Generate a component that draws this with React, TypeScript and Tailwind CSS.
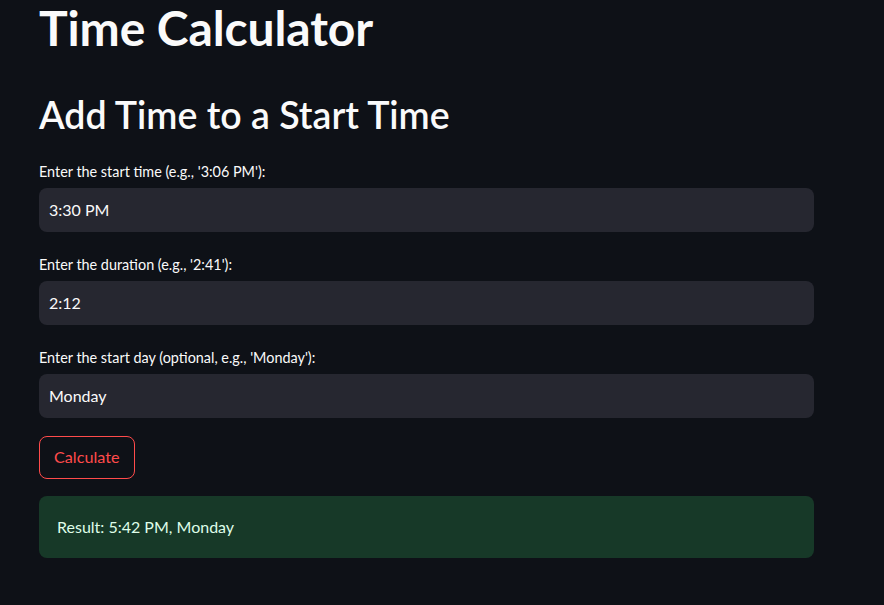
const labelCls = "text-[14.4px] leading-[20px] text-[#fafafa]";
const inputCls =
  "mt-[6px] flex h-[44px] w-full items-center rounded-[8px] bg-[#262730] px-[10px] text-[16px] text-[#fafafa]";

const Field = ({ label, value }: { label: string; value: string }) => {
  return (
    <div>
      <div className={labelCls}>{label}</div>
      <div className={inputCls}>{value}</div>
    </div>
  );
};

const App = () => {
  return (
    <div
      className="h-[605px] w-[884px] overflow-hidden bg-[#0e1117] text-[#fafafa]"
      style={{ fontFamily: "'Lato', 'Noto Sans', sans-serif" }}
    >
      <div className="w-[775px] pl-[39px] box-content">
        <h1 className="text-[48px] font-bold leading-[56px] tracking-[-0.1px]">
          Time Calculator
        </h1>
        <h2 className="mt-[37px] text-[37.5px] font-semibold leading-[44px]">
          Add Time to a Start Time
        </h2>
        <div className="mt-[25px] flex flex-col gap-[23px]">
          <Field label="Enter the start time (e.g., '3:06 PM'):" value="3:30 PM" />
          <Field label="Enter the duration (e.g., '2:41'):" value="2:12" />
          <Field
            label="Enter the start day (optional, e.g., 'Monday'):"
            value="Monday"
          />
        </div>
        <button
          type="button"
          className="mt-[18px] flex h-[43px] items-center rounded-[8px] border border-[#ff4b4b] px-[14px] text-[16.2px] text-[#ff4b4b]"
        >
          Calculate
        </button>
        <div className="mt-[17px] flex h-[62px] items-center rounded-[8px] bg-[#173928] px-[18px] text-[16px] text-[#dffde9]">
          Result: 5:42 PM, Monday
        </div>
      </div>
    </div>
  );
};

export default App;
